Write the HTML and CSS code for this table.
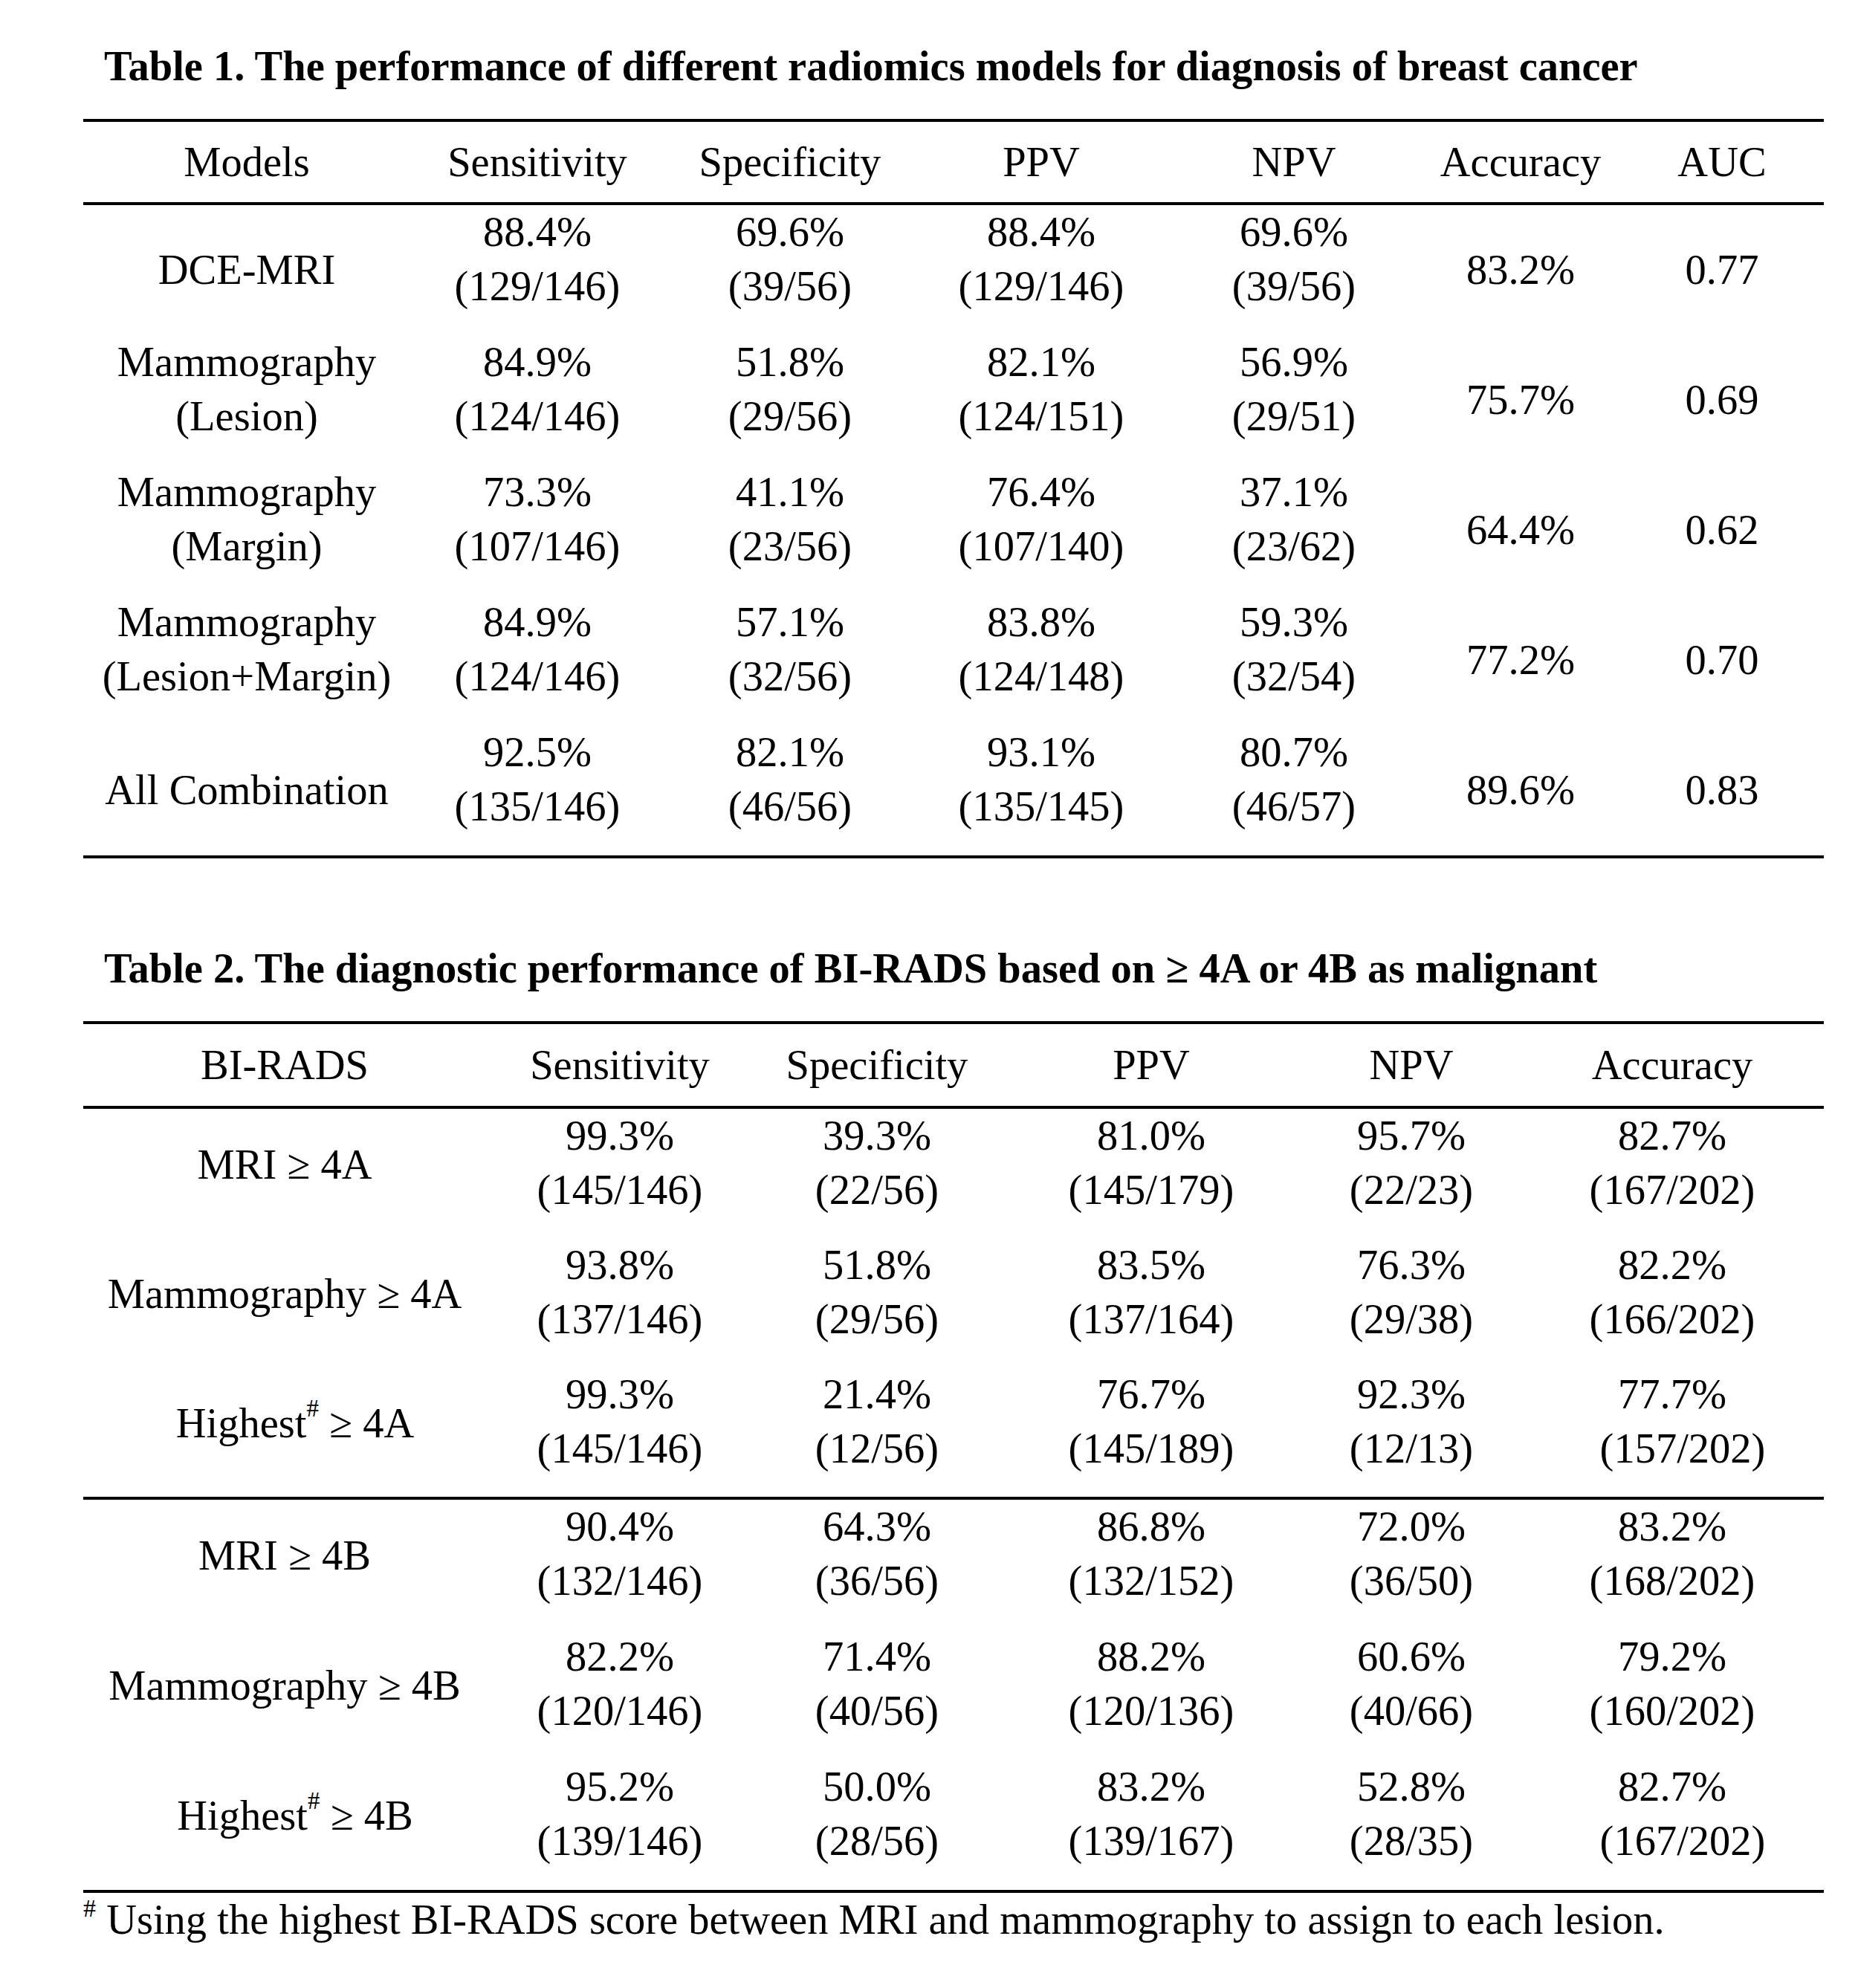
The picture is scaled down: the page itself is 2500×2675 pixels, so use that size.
FILE: index.html
```html
<!DOCTYPE html>
<html lang="en">
<head>
<meta charset="utf-8">
<title>Radiomics tables</title>
<link rel="stylesheet" href="styles.css">
</head>
<body>
<div class="page">
  <p class="caption first">Table 1. The performance of different radiomics models for diagnosis of breast cancer</p>
  <table class="tbl t1">
    <colgroup>
      <col class="c1a"><col class="c1b"><col class="c1c"><col class="c1d"><col class="c1e"><col class="c1f"><col class="c1g">
    </colgroup>
    <thead>
      <tr><th>Models</th><th>Sensitivity</th><th>Specificity</th><th>PPV</th><th>NPV</th><th>Accuracy</th><th>AUC</th></tr>
    </thead>
    <tbody>
      <tr>
        <td class="mid">DCE-MRI</td>
        <td>88.4%<br>(129/146)</td><td>69.6%<br>(39/56)</td><td>88.4%<br>(129/146)</td><td>69.6%<br>(39/56)</td>
        <td class="mid">83.2%</td><td class="mid">0.77</td>
      </tr>
      <tr>
        <td>Mammography<br>(Lesion)</td>
        <td>84.9%<br>(124/146)</td><td>51.8%<br>(29/56)</td><td>82.1%<br>(124/151)</td><td>56.9%<br>(29/51)</td>
        <td class="mid">75.7%</td><td class="mid">0.69</td>
      </tr>
      <tr>
        <td>Mammography<br>(Margin)</td>
        <td>73.3%<br>(107/146)</td><td>41.1%<br>(23/56)</td><td>76.4%<br>(107/140)</td><td>37.1%<br>(23/62)</td>
        <td class="mid">64.4%</td><td class="mid">0.62</td>
      </tr>
      <tr>
        <td>Mammography<br>(Lesion+Margin)</td>
        <td>84.9%<br>(124/146)</td><td>57.1%<br>(32/56)</td><td>83.8%<br>(124/148)</td><td>59.3%<br>(32/54)</td>
        <td class="mid">77.2%</td><td class="mid">0.70</td>
      </tr>
      <tr>
        <td class="mid">All Combination</td>
        <td>92.5%<br>(135/146)</td><td>82.1%<br>(46/56)</td><td>93.1%<br>(135/145)</td><td>80.7%<br>(46/57)</td>
        <td class="mid">89.6%</td><td class="mid">0.83</td>
      </tr>
    </tbody>
  </table>

  <p class="caption second">Table 2. The diagnostic performance of BI-RADS based on ≥ 4A or 4B as malignant</p>
  <table class="tbl t2">
    <colgroup>
      <col class="c2a"><col class="c2b"><col class="c2c"><col class="c2d"><col class="c2e"><col class="c2f">
    </colgroup>
    <thead>
      <tr><th>BI-RADS</th><th>Sensitivity</th><th>Specificity</th><th>PPV</th><th>NPV</th><th>Accuracy</th></tr>
    </thead>
    <tbody class="g1">
      <tr>
        <td class="label">MRI ≥ 4A</td>
        <td>99.3%<br>(145/146)</td><td>39.3%<br>(22/56)</td><td>81.0%<br>(145/179)</td><td>95.7%<br>(22/23)</td><td>82.7%<br>(167/202)</td>
      </tr>
      <tr>
        <td class="label">Mammography ≥ 4A</td>
        <td>93.8%<br>(137/146)</td><td>51.8%<br>(29/56)</td><td>83.5%<br>(137/164)</td><td>76.3%<br>(29/38)</td><td>82.2%<br>(166/202)</td>
      </tr>
      <tr>
        <td class="label"><span class="nudge">Highest<sup class="sup">#</sup> ≥ 4A</span></td>
        <td>99.3%<br>(145/146)</td><td>21.4%<br>(12/56)</td><td>76.7%<br>(145/189)</td><td>92.3%<br>(12/13)</td><td>77.7%<br><span class="nudge">(157/202)</span></td>
      </tr>
    </tbody>
    <tbody class="g2">
      <tr>
        <td class="label">MRI ≥ 4B</td>
        <td>90.4%<br>(132/146)</td><td>64.3%<br>(36/56)</td><td>86.8%<br>(132/152)</td><td>72.0%<br>(36/50)</td><td>83.2%<br>(168/202)</td>
      </tr>
      <tr>
        <td class="label">Mammography ≥ 4B</td>
        <td>82.2%<br>(120/146)</td><td>71.4%<br>(40/56)</td><td>88.2%<br>(120/136)</td><td>60.6%<br>(40/66)</td><td>79.2%<br>(160/202)</td>
      </tr>
      <tr>
        <td class="label"><span class="nudge">Highest<sup class="sup">#</sup> ≥ 4B</span></td>
        <td>95.2%<br>(139/146)</td><td>50.0%<br>(28/56)</td><td>83.2%<br>(139/167)</td><td>52.8%<br>(28/35)</td><td>82.7%<br><span class="nudge">(167/202)</span></td>
      </tr>
    </tbody>
  </table>
  <p class="footnote"><sup class="fsup">#</sup> Using the highest BI-RADS score between MRI and mammography to assign to each lesion.</p>
</div>
</body>
</html>
```

FILE: styles.css
```css
* {
  box-sizing: border-box;
}

html,
body {
  margin: 0;
  padding: 0;
  background: #ffffff;
}

body {
  font-family: "Liberation Serif", "Times New Roman", serif;
  font-size: 56.5px;
  line-height: 73px;
  color: #000000;
}

.page {
  width: 2500px;
  min-height: 2675px;
  padding-left: 112px;
  overflow: hidden;
}

.caption {
  font-weight: bold;
  margin: 0 0 34px 28px;
  line-height: 73px;
  white-space: nowrap;
}

.caption.first {
  margin-top: 53px;
}

.caption.second {
  margin-top: 112px;
}

.tbl {
  border-collapse: separate;
  border-spacing: 0;
  table-layout: fixed;
  width: 2342px;
}

.tbl th {
  font-weight: normal;
  text-align: center;
  border-top: 4px solid #000;
  border-bottom: 4px solid #000;
  white-space: nowrap;
}

.t1 th {
  padding: 17.5px 0;
}

.t2 th {
  padding: 18.5px 0;
}

.tbl td {
  text-align: center;
  vertical-align: top;
  white-space: nowrap;
  padding: 0 0 29px 0;
}

.t1 td.mid {
  vertical-align: middle;
  padding: 0;
}

.t1 tbody tr:last-child td {
  border-bottom: 4px solid #000;
}

.t2 .g1 td {
  padding-bottom: 28px;
}

.t2 .g2 td {
  padding-bottom: 29px;
}

.t2 .g1 tr:last-child td,
.t2 .g2 tr:last-child td {
  border-bottom: 4px solid #000;
}

.t2 td.label {
  padding-top: 39px;
}

.nudge {
  padding-left: 28px;
}

.sup {
  font-size: 33px;
  line-height: 0;
  vertical-align: 28px;
}

.fsup {
  font-size: 34px;
  line-height: 0;
  vertical-align: 23px;
}

/* Table 1 column widths */
.c1a { width: 440px; }
.c1b { width: 342px; }
.c1c { width: 338px; }
.c1d { width: 338px; }
.c1e { width: 342px; }
.c1f { width: 268px; }
.c1g { width: 274px; }

/* Table 2 column widths */
.c2a { width: 542px; }
.c2b { width: 360px; }
.c2c { width: 332px; }
.c2d { width: 406px; }
.c2e { width: 294px; }
.c2f { width: 408px; }

.footnote {
  margin: 0;
  line-height: 73px;
  white-space: nowrap;
}
```
